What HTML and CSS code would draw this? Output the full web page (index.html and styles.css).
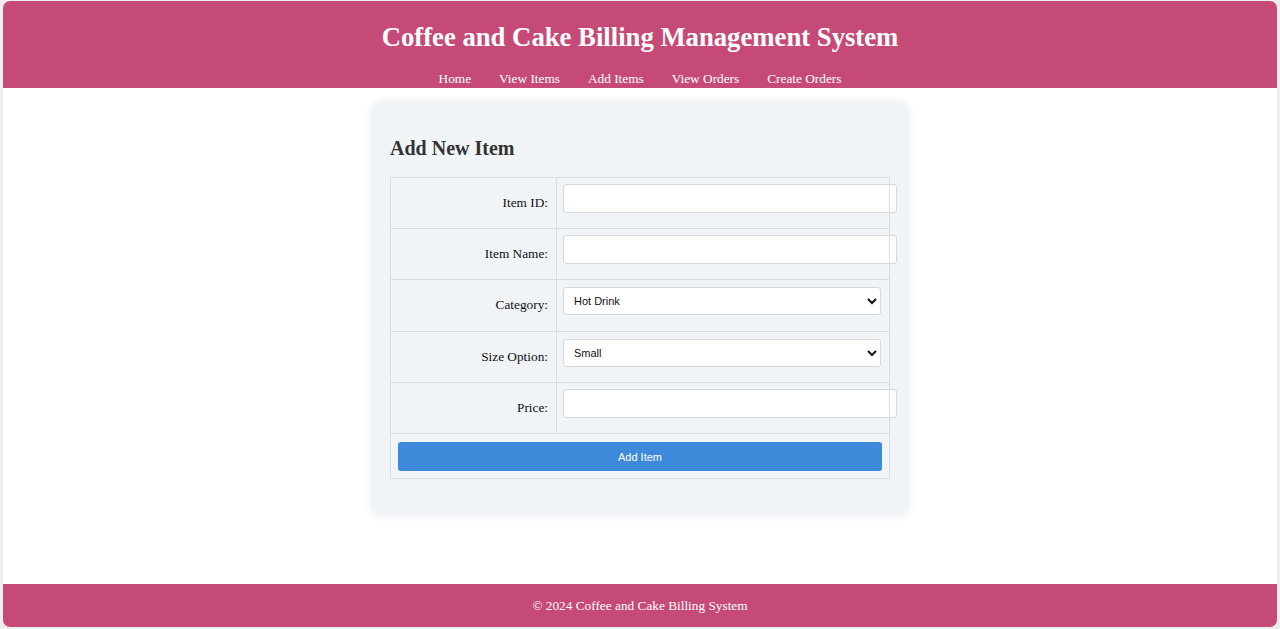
FILE: index.html
```html
<!DOCTYPE html>
<html lang="en">
<head>
<meta charset="utf-8">
<title>Add Item</title>
<link rel="stylesheet" href="styles.css">
</head>
<body>
<div class="frame">
  <header class="site-header">
    <h1 class="site-title">Coffee and Cake Billing Management System</h1>
    <nav class="site-nav">
      <a href="#">Home</a>
      <a href="#">View Items</a>
      <a href="#">Add Items</a>
      <a href="#">View Orders</a>
      <a href="#">Create Orders</a>
    </nav>
  </header>
  <main class="main">
    <section class="card">
      <h2 class="card-title">Add New Item</h2>
      <form class="item-form">
        <table class="form-table">
          <tr>
            <td class="label-cell"><label for="id">Item ID:</label></td>
            <td class="field-cell"><input class="text-input" id="id" type="text"></td>
          </tr>
          <tr>
            <td class="label-cell"><label for="name">Item Name:</label></td>
            <td class="field-cell"><input class="text-input" id="name" type="text"></td>
          </tr>
          <tr>
            <td class="label-cell"><label for="cat">Category:</label></td>
            <td class="field-cell"><select class="select-input" id="cat"><option>Hot Drink</option></select></td>
          </tr>
          <tr>
            <td class="label-cell"><label for="size">Size Option:</label></td>
            <td class="field-cell"><select class="select-input" id="size"><option>Small</option></select></td>
          </tr>
          <tr>
            <td class="label-cell"><label for="price">Price:</label></td>
            <td class="field-cell"><input class="text-input" id="price" type="text"></td>
          </tr>
          <tr>
            <td class="button-cell" colspan="2"><button class="submit-btn" type="button">Add Item</button></td>
          </tr>
        </table>
      </form>
    </section>
  </main>
  <footer class="site-footer">© 2024 Coffee and Cake Billing System</footer>
</div>
</body>
</html>
```

FILE: styles.css
```css
html, body {
  margin: 0;
  padding: 0;
  height: 100%;
}
body {
  background: #eeeeee;
  font-family: "Liberation Serif", "Times New Roman", serif;
  padding: 1px 3px 2px 3px;
  box-sizing: border-box;
}
.frame {
  height: 100%;
  display: flex;
  flex-direction: column;
  background: #ffffff;
  border-radius: 7px;
  overflow: hidden;
}
.site-header {
  background: #c64a77;
  color: #ffffff;
  text-align: center;
  padding: 21px 0 0;
}
.site-title {
  margin: 0;
  font-size: 26.7px;
  line-height: 30px;
  font-weight: bold;
}
.site-nav {
  margin-top: 19px;
  display: flex;
  justify-content: center;
  gap: 28px;
}
.site-nav a {
  color: #ffffff;
  text-decoration: none;
  font-size: 13.3px;
  line-height: 15px;
  padding-bottom: 2px;
}
.main {
  flex: 1;
  display: flex;
  justify-content: center;
  align-items: flex-start;
  padding-top: 14px;
}
.card {
  width: 500px;
  background: #f0f4f7;
  border-radius: 8px;
  box-shadow: 0 0 8px rgba(0, 0, 0, 0.09);
  padding: 1px 18px 36px;
}
.card-title {
  font-size: 20px;
  line-height: 23px;
  margin: 34px 0 17px;
  color: #333333;
}
.item-form {
  margin: 0;
}
.form-table {
  width: 100%;
  border-collapse: collapse;
  border: 1px solid #d9dee3;
}
.form-table td {
  border: 1px solid #d9dee3;
  padding: 6px 8px;
  vertical-align: middle;
}
.form-table td.field-cell {
  padding: 6px 10px 6px 6px;
}
.label-cell {
  width: 149px;
  text-align: right;
  font-size: 13.3px;
  color: #111111;
}
.text-input {
  display: block;
  width: 100%;
  height: 11px;
  padding: 8px;
  margin: 0 0 9px;
  border: 1px solid #d4d8dd;
  border-radius: 3px;
  background: #ffffff;
  font-size: 11px;
  font-family: "Liberation Sans", Arial, sans-serif;
}
.select-input {
  display: block;
  width: calc(100% + 2px);
  box-sizing: border-box;
  height: 28px;
  margin: 1px 0 9.5px;
  padding: 0 6px;
  border: 1px solid #d4d8dd;
  border-radius: 3px;
  background: #ffffff;
  font-size: 11px;
  font-family: "Liberation Sans", Arial, sans-serif;
  color: #111111;
}
.form-table td.button-cell {
  padding: 8px 7px 7px;
}
.submit-btn {
  display: block;
  width: 100%;
  height: 29px;
  background: #3d89da;
  color: #ffffff;
  border: none;
  border-radius: 3px;
  font-size: 11px;
  font-family: "Liberation Sans", Arial, sans-serif;
}
.site-footer {
  background: #c64a77;
  color: #ffffff;
  text-align: center;
  font-size: 13.3px;
  line-height: 15px;
  padding: 14px 0;
}
```
